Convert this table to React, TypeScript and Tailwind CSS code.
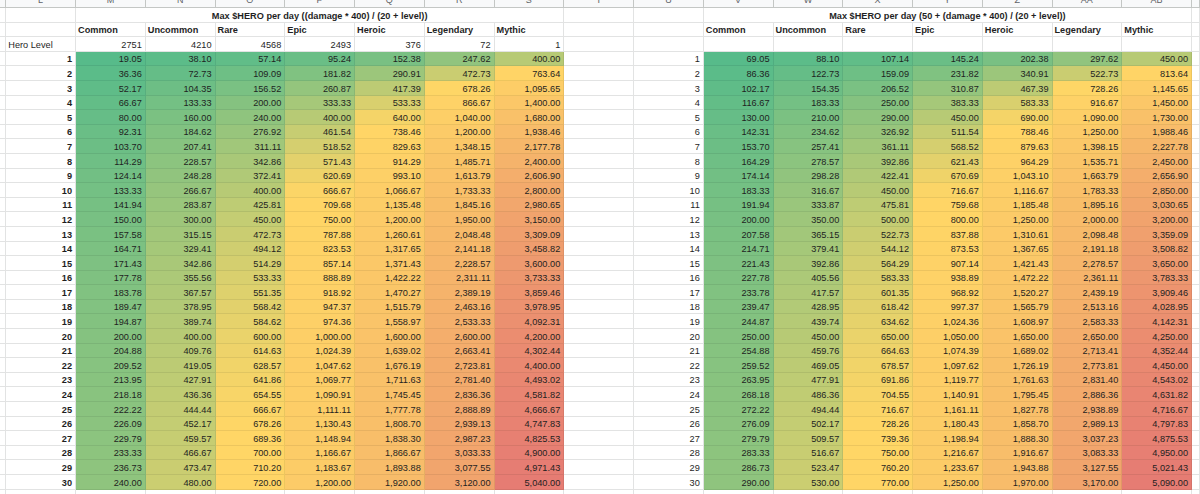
import React from "react";

const R = [1, 2, 3, 5, 8, 13, 21];
const NAMES = ["Common", "Uncommon", "Rare", "Epic", "Heroic", "Legendary", "Mythic"];
const COUNTS = [2751, 4210, 4568, 2493, 376, 72, 1];
const LEVELS = Array.from({ length: 30 }, (_, i) => i + 1);
const LETTERS = ["", "L", "M", "N", "O", "P", "Q", "R", "S", "T", "U", "V", "W", "X", "Y", "Z", "AA", "AB", ""];

const GREEN = [0x57, 0xbb, 0x8a];
const YELLOW = [0xff, 0xd6, 0x66];
const RED = [0xe6, 0x7c, 0x73];

function val(r: number, L: number, off: number) {
  return off + (r * L * 400) / (20 + L);
}

function fmt(n: number) {
  const s = (Math.round(n * 100) / 100).toFixed(2);
  const [i, d] = s.split(".");
  return i.replace(/\B(?=(\d{3})+(?!\d))/g, ",") + "." + d;
}

function mix(a: number[], b: number[], t: number) {
  const c = a.map((x, k) => Math.round(x + (b[k] - x) * t));
  return `rgb(${c[0]}, ${c[1]}, ${c[2]})`;
}

function makeScale(off: number) {
  const all: number[] = [];
  for (const L of LEVELS) for (const r of R) all.push(val(r, L, off));
  const s = [...all].sort((a, b) => a - b);
  const min = s[0];
  const max = s[s.length - 1];
  const n = s.length;
  const mid = n % 2 ? s[(n - 1) / 2] : (s[n / 2 - 1] + s[n / 2]) / 2;
  return (v: number) => {
    if (v <= mid) return mix(GREEN, YELLOW, (v - min) / (mid - min));
    return mix(YELLOW, RED, (v - mid) / (max - mid));
  };
}

const scale1 = makeScale(0);
const scale2 = makeScale(50);

const cell =
  "h-full flex items-end leading-[12px] whitespace-nowrap overflow-hidden border-r border-b border-[#e2e3e3]";
const colored =
  "h-full flex items-end justify-end pr-[3px] leading-[12px] whitespace-nowrap overflow-hidden border-r border-b border-black/[0.07]";

function Empty() {
  return <div className={cell} />;
}

export default function App() {
  const rows: React.ReactNode[] = [];

  // column letters row
  LETTERS.forEach((l, i) => {
    rows.push(
      <div
        key={"h" + i}
        className="h-full overflow-hidden bg-[#f8f9fa] border-r border-b border-[#c4c7c5] flex justify-center"
      >
        <span className="-mt-[5px] leading-[10px] text-[9px] text-[#5f6368]">{l}</span>
      </div>
    );
  });

  // title row
  rows.push(<Empty key="t0" />, <Empty key="t1" />);
  rows.push(
    <div key="t2" className={cell + " col-span-7 justify-center font-bold"}>
      Max $HERO per day ((damage * 400) / (20 + level))
    </div>
  );
  rows.push(<Empty key="t3" />, <Empty key="t4" />);
  rows.push(
    <div key="t5" className={cell + " col-span-7 justify-center font-bold"}>
      Max $HERO per day (50 + (damage * 400) / (20 + level))
    </div>
  );
  rows.push(<Empty key="t6" />);

  // column names row
  rows.push(<Empty key="c0" />, <Empty key="c1" />);
  NAMES.forEach((n) =>
    rows.push(
      <div key={"ca" + n} className={cell + " pl-[2px] font-bold"}>
        {n}
      </div>
    )
  );
  rows.push(<Empty key="c2" />, <Empty key="c3" />);
  NAMES.forEach((n) =>
    rows.push(
      <div key={"cb" + n} className={cell + " pl-[2px] font-bold"}>
        {n}
      </div>
    )
  );
  rows.push(<Empty key="c4" />);

  // hero level row
  rows.push(<Empty key="hl0" />);
  rows.push(
    <div key="hl1" className={cell + " pl-[2px]"}>
      Hero Level
    </div>
  );
  COUNTS.forEach((c, i) =>
    rows.push(
      <div key={"hc" + i} className={cell + " justify-end pr-[3px]"}>
        {c}
      </div>
    )
  );
  rows.push(<Empty key="hl2" />, <Empty key="hl3" />);
  NAMES.forEach((n) => rows.push(<Empty key={"he" + n} />));
  rows.push(<Empty key="hl4" />);

  // data rows
  LEVELS.forEach((L) => {
    rows.push(<Empty key={"d0" + L} />);
    rows.push(
      <div key={"d1" + L} className={cell + " justify-end pr-[3px] font-bold"}>
        {L}
      </div>
    );
    R.forEach((r, i) => {
      const v = val(r, L, 0);
      rows.push(
        <div key={"da" + L + "-" + i} className={colored} style={{ backgroundColor: scale1(v) }}>
          {fmt(v)}
        </div>
      );
    });
    rows.push(<Empty key={"d2" + L} />);
    rows.push(
      <div key={"d3" + L} className={cell + " justify-end pr-[3px]"}>
        {L}
      </div>
    );
    R.forEach((r, i) => {
      const v = val(r, L, 50);
      rows.push(
        <div key={"db" + L + "-" + i} className={colored} style={{ backgroundColor: scale2(v) }}>
          {fmt(v)}
        </div>
      );
    });
    rows.push(<Empty key={"d4" + L} />);
  });

  // trailing partial row
  LETTERS.forEach((_, i) => rows.push(<Empty key={"z" + i} />));

  return (
    <div
      className="w-[1200px] h-[494px] overflow-hidden bg-white text-[9.2px] text-[#1f1f1f]"
      style={{ fontFamily: '"Liberation Sans", Arial, sans-serif' }}
    >
      <div className="grid grid-cols-[6.25px_repeat(17,69.75px)_1fr] grid-rows-[8px] auto-rows-[14.6px]">
        {rows}
      </div>
    </div>
  );
}
